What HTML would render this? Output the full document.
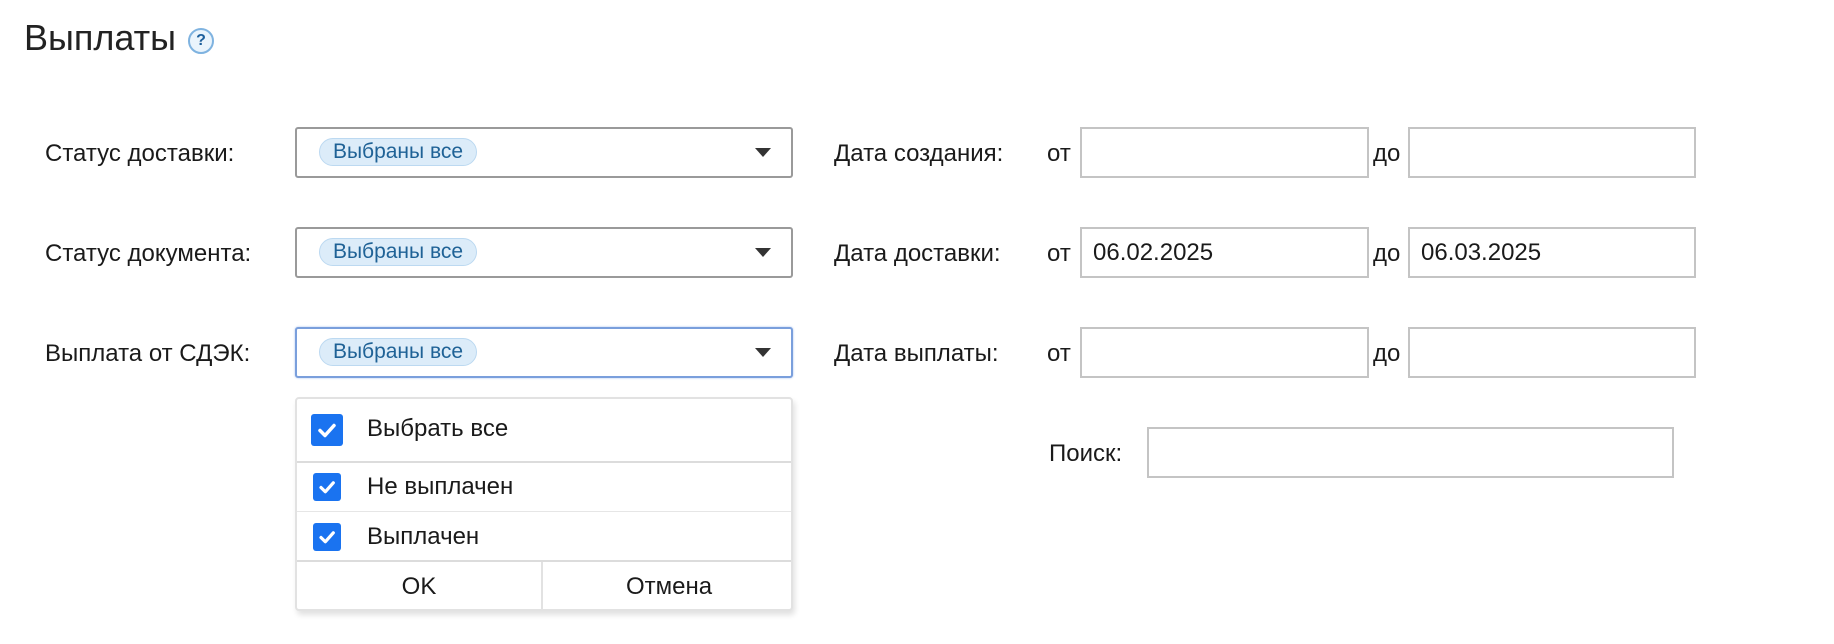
<!DOCTYPE html>
<html><head><meta charset="utf-8">
<style>
*{box-sizing:border-box;margin:0;padding:0}
body{width:1834px;height:644px;background:#fff;font-family:"Liberation Sans",Arial,sans-serif;color:#1a1a1a;position:relative;overflow:hidden}
.a{position:absolute}
.title{left:24px;top:16px;font-size:36px;color:#222;line-height:44px}
.help{left:188px;top:28px;width:26px;height:26px;border-radius:50%;border:2px solid #7fb3e0;background:#eaf4fc;color:#1d5f9c;font-size:16px;font-weight:bold;text-align:center;line-height:22px}
.lbl{font-size:24px;line-height:28px}
.sel{left:295px;width:498px;height:51px;border:2px solid #9a9a9a;border-radius:3px;background:#fff}
.sel.focus{border-color:#7a9fdc;box-shadow:0 0 2px #a9c3ee}
.chip{position:absolute;left:22px;top:9px;width:158px;height:28px;border-radius:14px;background:#dcecf9;border:1.5px solid #bcd9f1;color:#1f6296;font-size:21px;line-height:25px;text-align:center}
.arr{position:absolute;left:458px;top:19px;width:0;height:0;border-left:8px solid transparent;border-right:8px solid transparent;border-top:9px solid #333}
.inp{height:51px;border:2px solid #c4c4c4;background:#fff;font-size:24px;line-height:47px;padding-left:11px}
.dd{left:295px;top:397px;width:498px;height:214px;border:2px solid #e2e2e2;border-radius:4px;background:#fff;box-shadow:2px 4px 6px rgba(0,0,0,.12);overflow:hidden}
.row{position:absolute;left:0;width:100%;border-bottom:1.5px solid #e6e6e6}
.cb{position:absolute;background:#1a73f0;border-radius:3px}
.cb svg{position:absolute;left:0;top:0;width:100%;height:100%}
.rt{position:absolute;left:70px;font-size:24px;line-height:28px}
.btn{position:absolute;top:163px;height:49px;font-size:24px;line-height:49px;text-align:center}
</style></head><body>
<div class="a title">Выплаты</div>
<div class="a help">?</div>

<div class="a lbl" style="left:45px;top:140px">Статус доставки:</div>
<div class="a lbl" style="left:45px;top:240px">Статус документа:</div>
<div class="a lbl" style="left:45px;top:340px">Выплата от СДЭК:</div>

<div class="a sel" style="top:127px"><div class="chip">Выбраны все</div><div class="arr"></div></div>
<div class="a sel" style="top:227px"><div class="chip">Выбраны все</div><div class="arr"></div></div>
<div class="a sel focus" style="top:327px"><div class="chip">Выбраны все</div><div class="arr"></div></div>

<div class="a dd">
  <div class="row" style="top:0;height:64px;border-bottom:2px solid #dcdcdc">
    <div class="cb" style="left:14px;top:15px;width:32px;height:32px"><svg viewBox="0 0 32 32"><path d="M9 16.5l5 5 9-10" stroke="#fff" stroke-width="3.5" fill="none" stroke-linecap="round" stroke-linejoin="round"/></svg></div>
    <div class="rt" style="top:16px">Выбрать все</div>
  </div>
  <div class="row" style="top:64px;height:49px">
    <div class="cb" style="left:16px;top:10px;width:28px;height:28px"><svg viewBox="0 0 28 28"><path d="M8 14.5l4.3 4.3 8-9" stroke="#fff" stroke-width="3.2" fill="none" stroke-linecap="round" stroke-linejoin="round"/></svg></div>
    <div class="rt" style="top:10px">Не выплачен</div>
  </div>
  <div class="row" style="top:113px;height:50px;border-bottom:2px solid #dcdcdc">
    <div class="cb" style="left:16px;top:11px;width:28px;height:28px"><svg viewBox="0 0 28 28"><path d="M8 14.5l4.3 4.3 8-9" stroke="#fff" stroke-width="3.2" fill="none" stroke-linecap="round" stroke-linejoin="round"/></svg></div>
    <div class="rt" style="top:11px">Выплачен</div>
  </div>
  <div class="btn" style="left:0;width:246px;border-right:2px solid #e2e2e2">OK</div>
  <div class="btn" style="left:248px;width:248px">Отмена</div>
</div>

<div class="a lbl" style="left:834px;top:140px">Дата создания:</div>
<div class="a lbl" style="left:834px;top:240px">Дата доставки:</div>
<div class="a lbl" style="left:834px;top:340px">Дата выплаты:</div>

<div class="a lbl" style="left:1047px;top:140px">от</div>
<div class="a lbl" style="left:1047px;top:240px">от</div>
<div class="a lbl" style="left:1047px;top:340px">от</div>
<div class="a lbl" style="left:1373px;top:140px">до</div>
<div class="a lbl" style="left:1373px;top:240px">до</div>
<div class="a lbl" style="left:1373px;top:340px">до</div>

<div class="a inp" style="left:1080px;top:127px;width:289px"></div>
<div class="a inp" style="left:1408px;top:127px;width:288px"></div>
<div class="a inp" style="left:1080px;top:227px;width:289px">06.02.2025</div>
<div class="a inp" style="left:1408px;top:227px;width:288px">06.03.2025</div>
<div class="a inp" style="left:1080px;top:327px;width:289px"></div>
<div class="a inp" style="left:1408px;top:327px;width:288px"></div>

<div class="a lbl" style="left:1049px;top:440px">Поиск:</div>
<div class="a inp" style="left:1147px;top:427px;width:527px"></div>
</body></html>
